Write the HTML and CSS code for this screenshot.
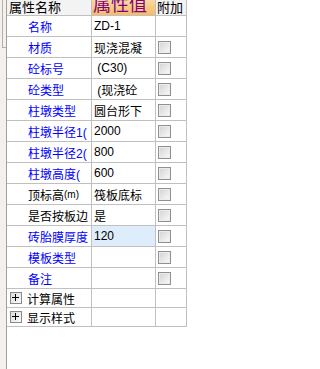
FILE: index.html
```html
<!DOCTYPE html>
<html>
<head>
<meta charset="utf-8">
<link rel="stylesheet" href="styles.css">
</head>
<body>
<div class="wrap">
  <div class="side"><div class="grip"></div></div>
  <div class="grid">
    <div class="row head">
      <div class="c c1 h1">属性名称</div>
      <div class="c c2 h2">属性值</div>
      <div class="c c3 h3">附加</div>
    </div>
    <div class="row"><div class="c c1 name">名称</div><div class="c c2 val">ZD-1</div><div class="c c3"></div></div>
    <div class="row"><div class="c c1 name">材质</div><div class="c c2 val">现浇混凝</div><div class="c c3"><span class="cb"></span></div></div>
    <div class="row"><div class="c c1 name">砼标号</div><div class="c c2 val">&nbsp;(C30)</div><div class="c c3"><span class="cb"></span></div></div>
    <div class="row"><div class="c c1 name">砼类型</div><div class="c c2 val">&nbsp;(现浇砼</div><div class="c c3"><span class="cb"></span></div></div>
    <div class="row"><div class="c c1 name">柱墩类型</div><div class="c c2 val">圆台形下</div><div class="c c3"><span class="cb"></span></div></div>
    <div class="row"><div class="c c1 name">柱墩半径1(</div><div class="c c2 val">2000</div><div class="c c3"><span class="cb"></span></div></div>
    <div class="row"><div class="c c1 name">柱墩半径2(</div><div class="c c2 val">800</div><div class="c c3"><span class="cb"></span></div></div>
    <div class="row"><div class="c c1 name">柱墩高度(</div><div class="c c2 val">600</div><div class="c c3"><span class="cb"></span></div></div>
    <div class="row"><div class="c c1 name dark">顶标高<span class="sm">(m)</span></div><div class="c c2 val">筏板底标</div><div class="c c3"><span class="cb"></span></div></div>
    <div class="row"><div class="c c1 name dark">是否按板边</div><div class="c c2 val">是</div><div class="c c3"><span class="cb"></span></div></div>
    <div class="row hl"><div class="c c1 name">砖胎膜厚度</div><div class="c c2 val">120</div><div class="c c3"><span class="cb"></span></div></div>
    <div class="row"><div class="c c1 name">模板类型</div><div class="c c2 val"></div><div class="c c3"><span class="cb"></span></div></div>
    <div class="row"><div class="c c1 name">备注</div><div class="c c2 val"></div><div class="c c3"><span class="cb"></span></div></div>
    <div class="row grp"><div class="c c1"><span class="plus"><svg width="10" height="10" viewBox="0 0 10 10"><path d="M1 4.5H8M4.5 1V8" stroke="#000" stroke-width="1"/></svg></span>计算属性</div><div class="c c2"></div><div class="c c3"></div></div>
    <div class="row grp"><div class="c c1"><span class="plus"><svg width="10" height="10" viewBox="0 0 10 10"><path d="M1 4.5H8M4.5 1V8" stroke="#000" stroke-width="1"/></svg></span>显示样式</div><div class="c c2"></div><div class="c c3"></div></div>
  </div>
</div>
</body>
</html>
```

FILE: styles.css
```css
html, body {
  margin: 0;
  padding: 0;
  background: #ffffff;
}
body {
  font-family: "Liberation Sans", "Noto Sans CJK SC", sans-serif;
  font-size: 12px;
  color: #000000;
}
.wrap {
  display: flex;
  height: 369px;
}
.side {
  width: 6px;
  flex: none;
  background: #f4f1ec;
  border-right: 1px solid #a0a0a0;
}
.grip {
  margin-left: 2px;
  height: 48px;
  box-sizing: border-box;
  border-left: 1px solid #b4b0aa;
  border-bottom: 1px solid #b4b0aa;
}
.grid {
  display: flex;
  flex-direction: column;
}
.row {
  display: flex;
  height: 21px;
  box-sizing: border-box;
  border-bottom: 1px solid #c0c0c0;
}
.head {
  height: 16px;
}
.grp {
  height: 19px;
}
.c {
  box-sizing: border-box;
  border-right: 1px solid #c0c0c0;
  overflow: hidden;
  white-space: nowrap;
  display: flex;
  align-items: center;
}
.c1 { width: 85px; }
.c2 { width: 64px; }
.c3 { width: 31px; }

.head .c {
  align-items: flex-end;
  background: #f3f3f3;
  font-family: "Noto Sans CJK SC", sans-serif;
}
.h1 {
  font-size: 13px;
  line-height: 13px;
  padding-left: 2px;
  padding-bottom: 2px;
}
.h2 {
  font-size: 18px;
  line-height: 18px;
  padding-left: 1px;
  padding-bottom: 3px;
  color: #800080;
}
.head .h2 {
  background: linear-gradient(#fad8a0, #f3bc68);
}
.h3 {
  font-size: 13px;
  line-height: 13px;
  padding-left: 1px;
  padding-bottom: 2px;
}
.name {
  padding-left: 21px;
  color: #0000ff;
}
.name.dark {
  color: #000000;
}
.sm {
  font-size: 10px;
}
.val {
  padding-left: 2px;
}
.hl .c2 {
  background: #deedfb;
}
.cb {
  width: 13px;
  height: 13px;
  box-sizing: border-box;
  margin-left: 2px;
  border: 1px solid #909090;
  background: linear-gradient(135deg, #d2d2d2, #fbfbfb);
  box-shadow: inset 0 0 0 1px #ececec;
}
.plus {
  width: 12px;
  height: 12px;
  box-sizing: border-box;
  margin-left: 3px;
  margin-right: 5px;
  border: 1px solid #8a8a8a;
  background: linear-gradient(135deg, #dcdcdc, #fafafa);
  display: flex;
  align-items: center;
  justify-content: center;
}
.plus svg {
  display: block;
}
```
